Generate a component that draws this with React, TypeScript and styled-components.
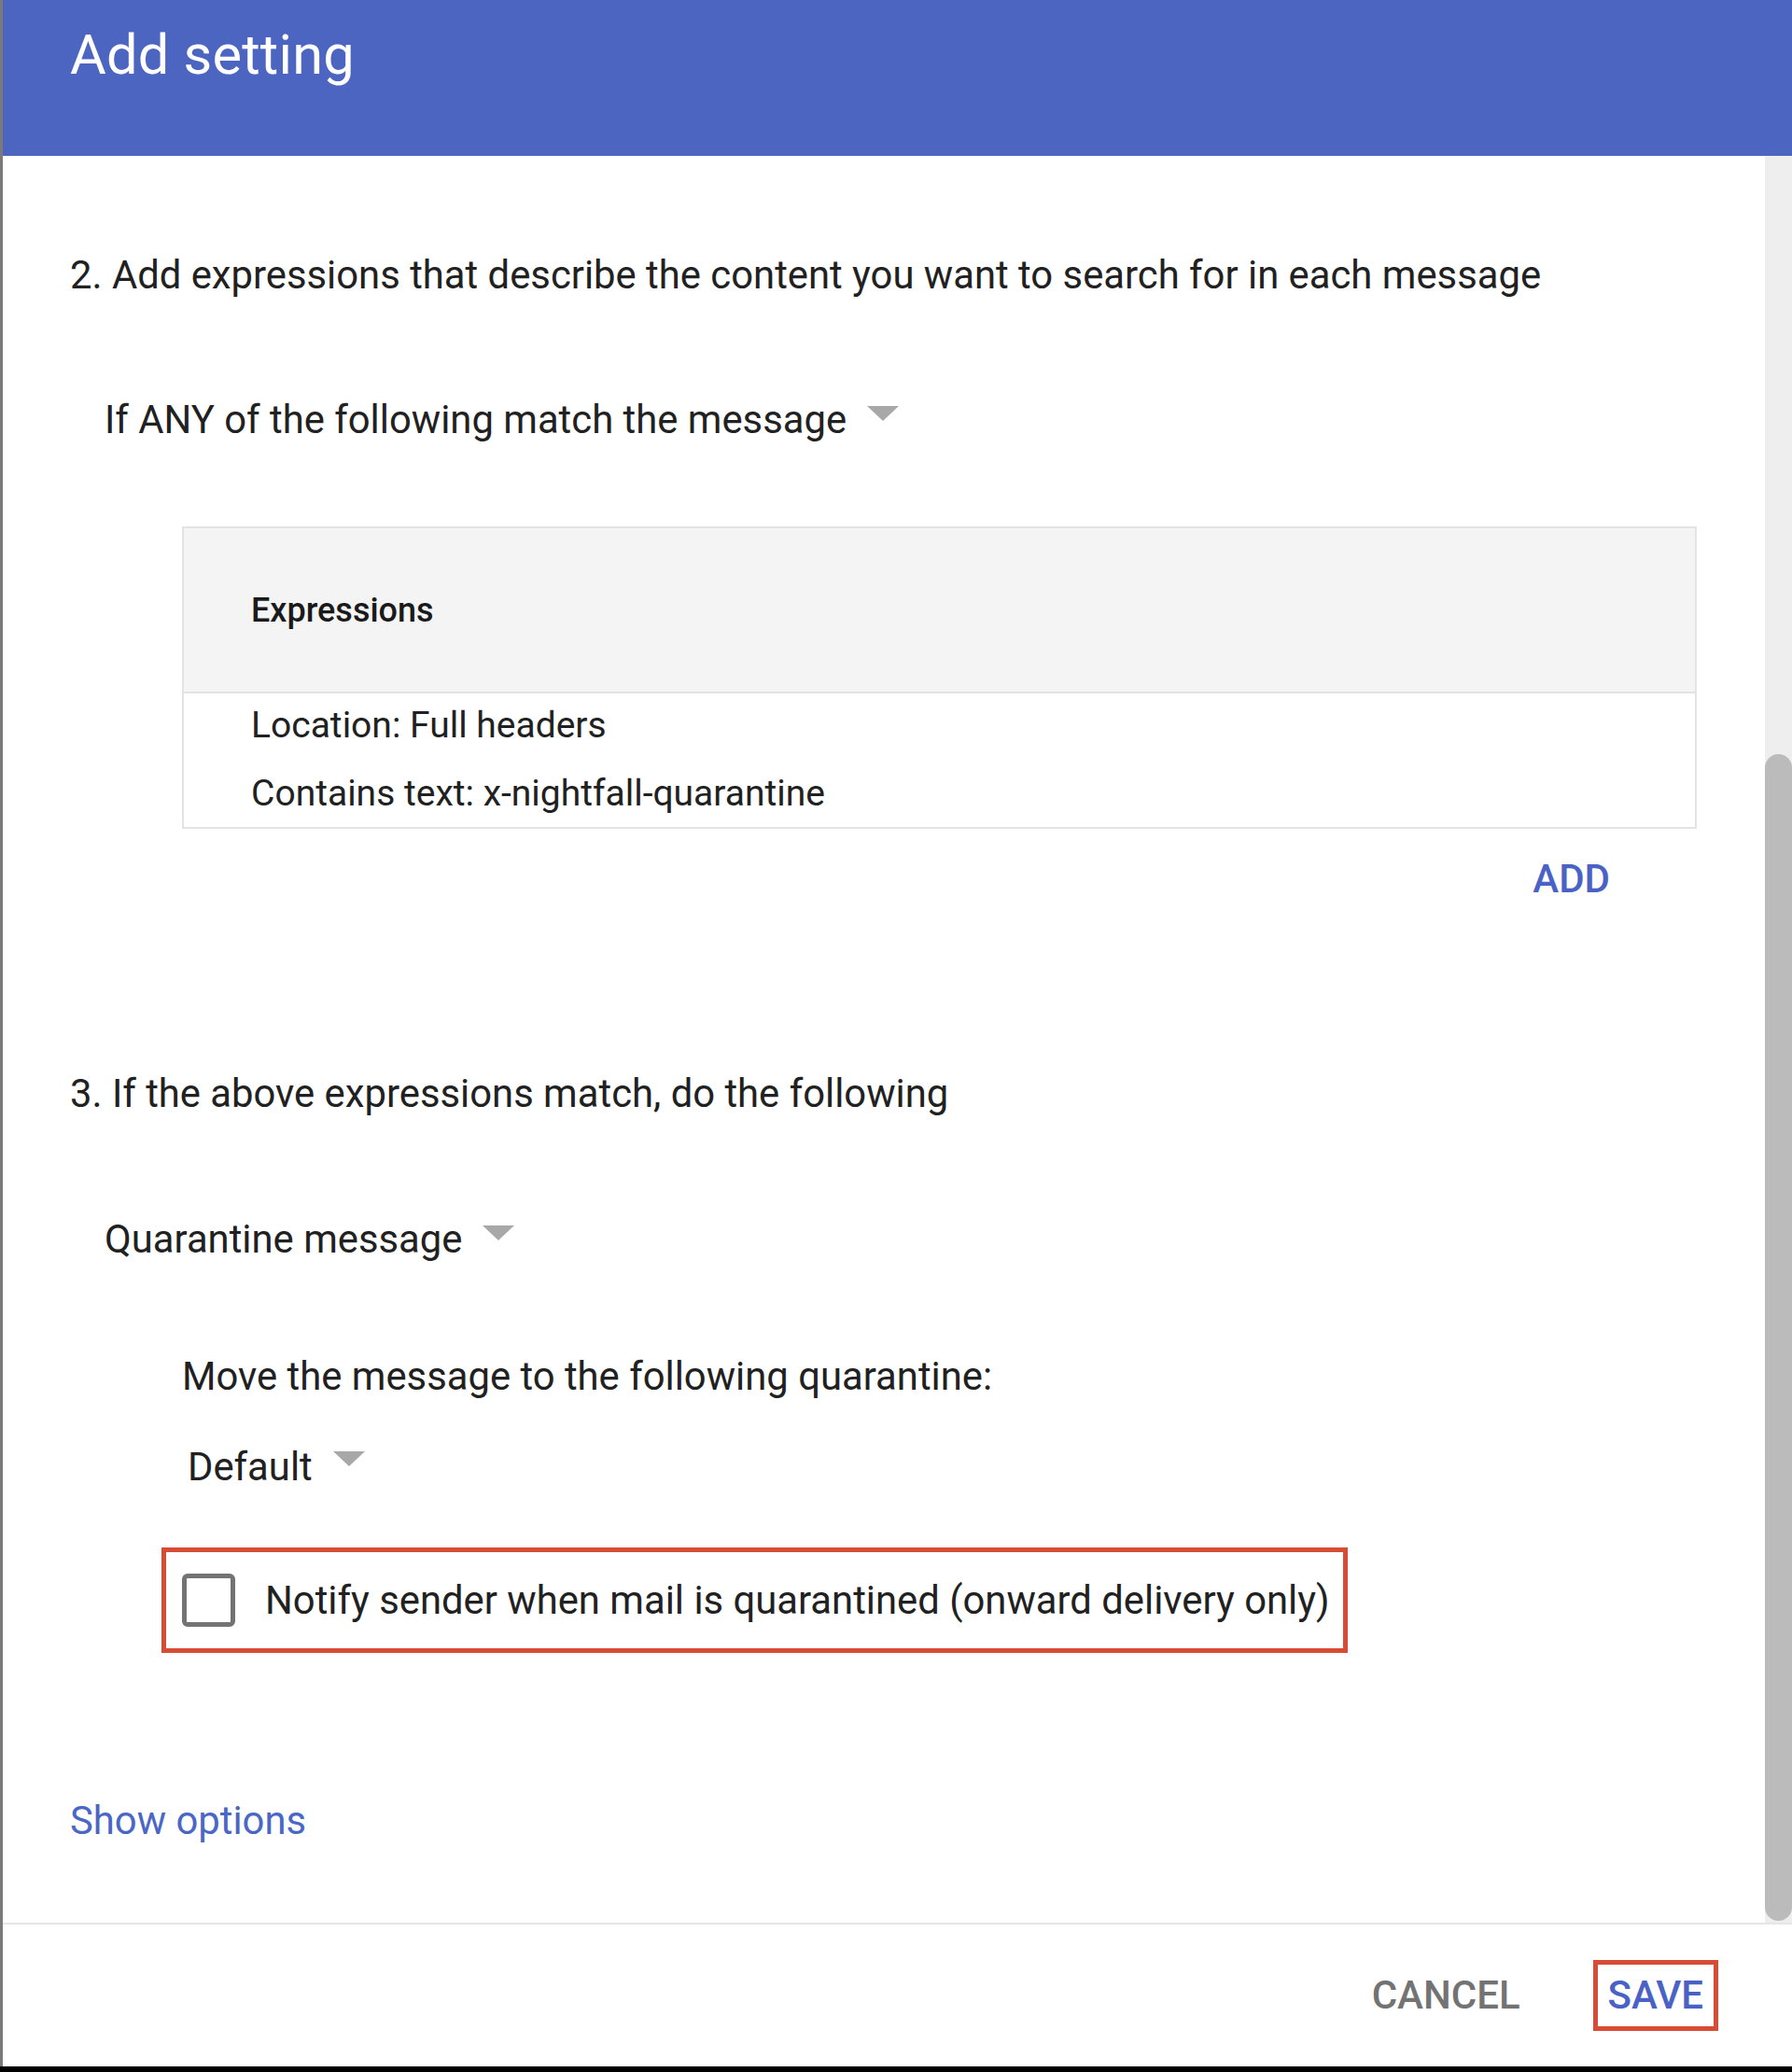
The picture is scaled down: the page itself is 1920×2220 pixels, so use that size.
import React from "react";
import styled, { createGlobalStyle } from "styled-components";

const GlobalStyle = createGlobalStyle`
  html, body {
    margin: 0;
    padding: 0;
    background: #000;
  }
  body {
    font-family: Roboto, "Liberation Sans", Arial, sans-serif;
    -webkit-font-smoothing: antialiased;
  }
`;

const Dialog = styled.div`
  width: 1920px;
  height: 2214px;
  box-sizing: border-box;
  background: #fff;
  border-left: 3px solid #7a7a7a;
  display: flex;
  flex-direction: column;
`;

const Header = styled.header`
  height: 167px;
  flex: 0 0 167px;
  background: #4b65c1;
  padding-left: 72px;
  box-sizing: border-box;
  display: flex;
  align-items: flex-start;
`;

const Title = styled.h1`
  margin: 23px 0 0;
  font-size: 59.5px;
  line-height: 72px;
  font-weight: 400;
  color: #ffffff;
  letter-spacing: 0.2px;
`;

const Body = styled.div`
  height: 1893px;
  flex: 0 0 1893px;
  display: flex;
  overflow: hidden;
`;

const Content = styled.div`
  flex: 1;
  padding: 103px 0 0 72px;
  display: flex;
  flex-direction: column;
  align-items: flex-start;
  color: #212121;
`;

const ScrollTrack = styled.div`
  width: 29px;
  background: #eeeeee;
  display: flex;
  flex-direction: column;
`;

const ScrollThumb = styled.div`
  margin-top: 641px;
  margin-bottom: 2px;
  flex: 1;
  background: #bbbbbb;
  border-radius: 15px;
`;

const SectionTitle = styled.div<{ $top?: number }>`
  margin-top: ${(p) => p.$top ?? 0}px;
  font-size: 41.8px;
  line-height: 50px;
  font-weight: 400;
`;

const SelectRow = styled.div<{ $top: number; $indent: number }>`
  margin-top: ${(p) => p.$top}px;
  margin-left: ${(p) => p.$indent}px;
  display: flex;
  align-items: flex-start;
  gap: 22px;
  font-size: 41.8px;
  line-height: 50px;
  cursor: pointer;
`;

const Caret = styled.span<{ $offset: number }>`
  width: 0;
  height: 0;
  margin-top: ${(p) => p.$offset}px;
  border-left: 17px solid transparent;
  border-right: 17px solid transparent;
  border-top: 16px solid #a8a8a8;
`;

const Table = styled.div`
  align-self: stretch;
  margin: 89px 73px 0 120px;
  border: 2px solid #e3e3e3;
`;

const TableHead = styled.div`
  height: 175px;
  background: #f4f4f4;
  border-bottom: 2px solid #e3e3e3;
  display: flex;
  align-items: center;
  padding-left: 72px;
  font-size: 36px;
  font-weight: 500;
  color: #1a1a1a;
`;

const TableBody = styled.div`
  padding: 9px 0 11px 72px;
  display: flex;
  flex-direction: column;
  gap: 23px;
  font-size: 39px;
  line-height: 50px;
`;

const AddRow = styled.div`
  align-self: stretch;
  margin: 29px 166px 0 0;
  display: flex;
  justify-content: flex-end;
`;

const TextButton = styled.button<{ $color: string }>`
  background: none;
  border: none;
  padding: 0;
  font-family: inherit;
  font-size: 42px;
  line-height: 50px;
  font-weight: 500;
  color: ${(p) => p.$color};
  cursor: pointer;
`;

const SubLabel = styled.div<{ $top: number; $indent: number }>`
  margin-top: ${(p) => p.$top}px;
  margin-left: ${(p) => p.$indent}px;
  font-size: 41.8px;
  line-height: 50px;
`;

const Highlight = styled.label`
  margin: 61px 0 0 98px;
  height: 113px;
  box-sizing: border-box;
  border: 5px solid #d84b35;
  padding: 0 14px 0 17px;
  display: flex;
  align-items: center;
  gap: 32px;
  font-size: 41.8px;
  line-height: 50px;
  cursor: pointer;
`;

const CheckBox = styled.span`
  width: 57px;
  height: 57px;
  box-sizing: border-box;
  border: 5px solid #737373;
  border-radius: 6px;
  flex: 0 0 auto;
`;

const LinkText = styled.a`
  margin-top: 155px;
  font-size: 41.8px;
  line-height: 50px;
  color: #4a67c6;
  text-decoration: none;
  cursor: pointer;
`;

const Footer = styled.footer`
  flex: 1;
  border-top: 2px solid #e6e6e6;
  display: flex;
  justify-content: flex-end;
  align-items: center;
  gap: 78px;
  padding-right: 79px;
`;

const SaveBox = styled.div`
  border: 5px solid #d84b35;
  padding: 0 11px;
  height: 76px;
  box-sizing: border-box;
  display: flex;
  align-items: center;
`;

export default function App() {
  return (
    <>
      <GlobalStyle />
      <Dialog>
        <Header>
          <Title>Add setting</Title>
        </Header>
        <Body>
          <Content>
            <SectionTitle>
              2. Add expressions that describe the content you want to search for in each message
            </SectionTitle>
            <SelectRow $top={105} $indent={37}>
              <span>If ANY of the following match the message</span>
              <Caret $offset={10} />
            </SelectRow>
            <Table>
              <TableHead>Expressions</TableHead>
              <TableBody>
                <div>Location: Full headers</div>
                <div>Contains text: x-nightfall-quarantine</div>
              </TableBody>
            </Table>
            <AddRow>
              <TextButton $color="#4a62c6">ADD</TextButton>
            </AddRow>
            <SectionTitle $top={180}>3. If the above expressions match, do the following</SectionTitle>
            <SelectRow $top={106} $indent={37}>
              <span>Quarantine message</span>
              <Caret $offset={10} />
            </SelectRow>
            <SubLabel $top={97} $indent={120}>
              Move the message to the following quarantine:
            </SubLabel>
            <SelectRow $top={47} $indent={126}>
              <span>Default</span>
              <Caret $offset={8} />
            </SelectRow>
            <Highlight>
              <CheckBox />
              <span>Notify sender when mail is quarantined (onward delivery only)</span>
            </Highlight>
            <LinkText>Show options</LinkText>
          </Content>
          <ScrollTrack>
            <ScrollThumb />
          </ScrollTrack>
        </Body>
        <Footer>
          <TextButton $color="#737373">CANCEL</TextButton>
          <SaveBox>
            <TextButton $color="#4a62c6">SAVE</TextButton>
          </SaveBox>
        </Footer>
      </Dialog>
    </>
  );
}
